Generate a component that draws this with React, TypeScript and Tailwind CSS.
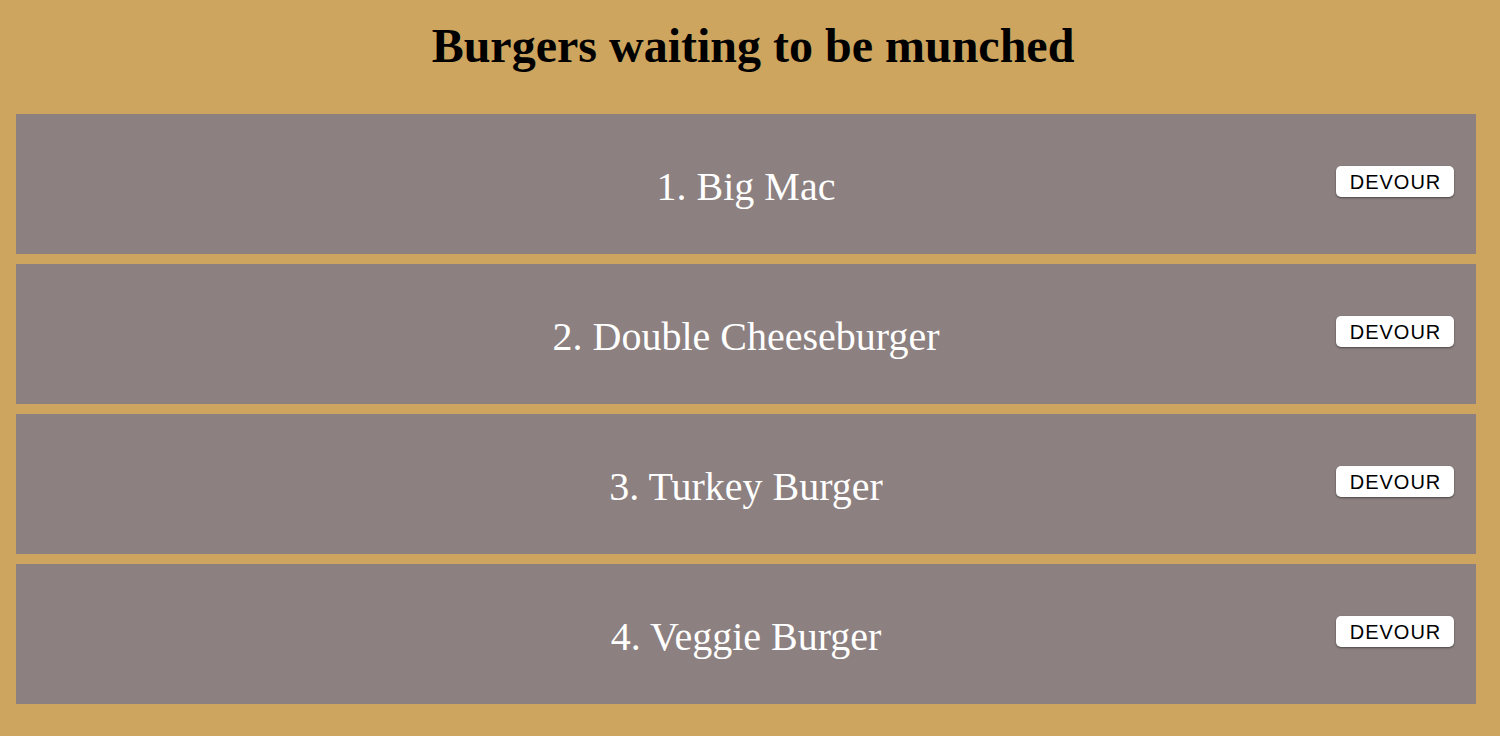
import React from "react";

const burgers = ["Big Mac", "Double Cheeseburger", "Turkey Burger", "Veggie Burger"];

export default function App() {
  return (
    <div className="min-h-[736px] bg-[#cda55e] pb-8 pl-4 pr-6" style={{ fontFamily: '"Liberation Serif", serif' }}>
      <h1 className="h-[114px] pl-[14px] pt-[18px] text-center text-[48px] font-bold leading-[56px] text-black">
        Burgers waiting to be munched
      </h1>
      <div className="flex flex-col gap-[10px]">
        {burgers.map((b, i) => (
          <div key={b} className="relative flex h-[140px] items-center justify-center bg-[#8c8080]">
            <span className="pt-[6px] text-[40px] text-white">
              {i + 1}. {b}
            </span>
            <button
              className="absolute right-[22px] top-[52px] flex h-[31px] w-[118px] items-center justify-center rounded-[5px] bg-white pl-[1px] text-[20px] tracking-[1px] text-black shadow-[0_1px_2px_rgba(0,0,0,0.45)]"
              style={{ fontFamily: '"Liberation Sans", sans-serif' }}
            >
              DEVOUR
            </button>
          </div>
        ))}
      </div>
    </div>
  );
}
